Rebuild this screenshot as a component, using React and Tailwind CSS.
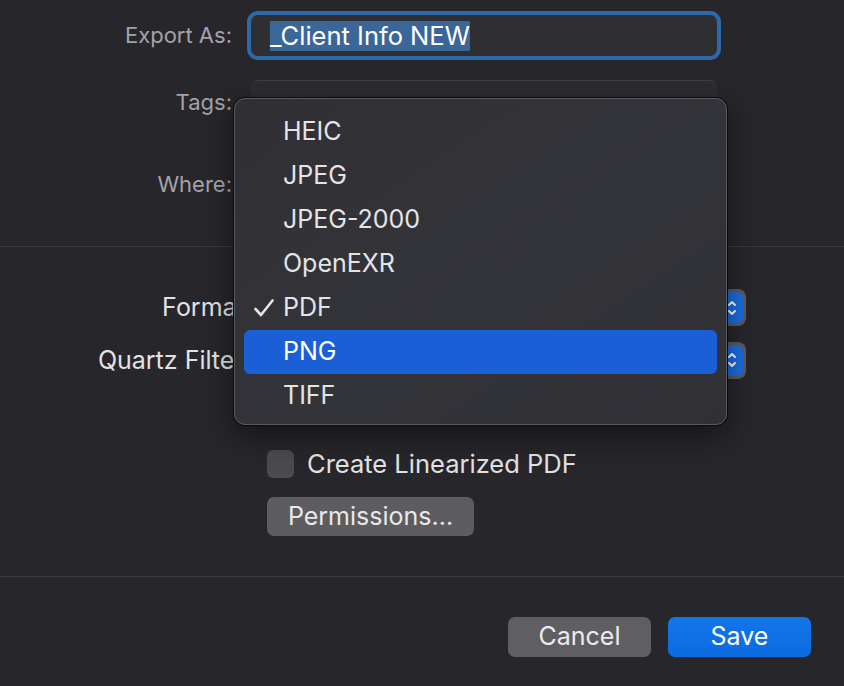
import React from 'react';

const formats = ['HEIC', 'JPEG', 'JPEG-2000', 'OpenEXR', 'PDF', 'PNG', 'TIFF'];

function Stepper() {
  return (
    <div className="w-[22px] h-[31px] rounded-[6px] bg-[#1d6de0] flex items-center justify-center">
      <svg width="12" height="20" viewBox="0 0 12 20" fill="none" stroke="#ffffff" strokeWidth="2" strokeLinecap="round" strokeLinejoin="round">
        <path d="M3 7 L6 4 L9 7" />
        <path d="M3 13 L6 16 L9 13" />
      </svg>
    </div>
  );
}

function PopupButton() {
  return (
    <div className="w-[491px] h-[37px] rounded-[8px] bg-[#5c5b60] p-[3px] flex items-center justify-end">
      <Stepper />
    </div>
  );
}

function Check() {
  return (
    <svg width="22" height="20" viewBox="0 0 22 20" fill="none" stroke="#e4e4e6" strokeWidth="2.6" strokeLinecap="round" strokeLinejoin="round">
      <path d="M2.5 11 L8 17 L19.5 2.5" />
    </svg>
  );
}

function FormatMenu() {
  const selected = 'PDF';
  const highlighted = 'PNG';
  return (
    <div className="absolute left-[234px] top-[98px] w-[493px] h-[327px] rounded-[11px] border border-[#5a595e] bg-gradient-to-br from-[#302f34] via-[#333439] to-[#303035] shadow-[0_0_0_1px_#0b0b0d,0_10px_30px_rgba(0,0,0,0.5)] pt-[11px] px-[9px]">
      {formats.map((f) => (
        <div
          key={f}
          className={
            f === highlighted
              ? 'h-[44px] rounded-[6px] bg-[#1b5fd6] flex items-center text-white'
              : 'h-[44px] flex items-center text-[#e4e4e6]'
          }
        >
          <span className="w-[39px] pl-[9px] flex items-center">{f === selected ? <Check /> : null}</span>
          <span className="text-[25px]">{f}</span>
        </div>
      ))}
    </div>
  );
}

export default function App() {
  return (
    <div className="relative w-[844px] h-[686px] overflow-hidden bg-[#27262b] font-['Inter','Liberation_Sans',sans-serif]">
      {/* name / tags / where */}
      <div className="h-[247px] border-b border-[#3b3a3f] pt-[11px]">
        <div className="flex items-center h-[49px]">
          <div className="w-[232px] text-right text-[22px] text-[#a4a3a8]">Export As:</div>
          <div className="ml-[15px] w-[474px] h-[49px] rounded-[11px] border-[4px] border-[#2b6aa6] bg-[#2f2e33] flex items-center pl-[19px]">
            <span className="bg-[#3b6698] text-white text-[25.5px] leading-[30px]">_Client Info NEW</span>
          </div>
        </div>
        <div className="flex items-center h-[44px] mt-[20px]">
          <div className="w-[232px] text-right text-[22px] text-[#a4a3a8]">Tags:</div>
          <div className="ml-[19px] w-[466px] h-[44px] rounded-[7px] bg-[#2d2c31] border-t border-[#3e3d42]"></div>
        </div>
        <div className="flex items-center h-[40px] mt-[40px]">
          <div className="w-[232px] text-right text-[22px] text-[#a4a3a8]">Where:</div>
          <div className="ml-[19px] w-[466px] h-[40px] rounded-[7px] bg-[#3a393e]"></div>
        </div>
      </div>

      {/* options */}
      <div className="h-[330px] border-b border-[#3b3a3f] pt-[42px]">
        <div className="flex items-center">
          <div className="w-[252px] text-right text-[25px] text-[#e2e2e4]">Format:</div>
          <div className="ml-[3px]"><PopupButton /></div>
        </div>
        <div className="flex items-center mt-[15px]">
          <div className="w-[251px] text-right text-[25px] text-[#e2e2e4]">Quartz Filter:</div>
          <div className="ml-[4px]"><PopupButton /></div>
        </div>
        <div className="flex items-center mt-[70px] ml-[267px] gap-[13px]">
          <div className="w-[27px] h-[28px] rounded-[6px] bg-[#4b4a4f]"></div>
          <span className="text-[25.5px] leading-[30px] text-[#e2e2e4]">Create Linearized PDF</span>
        </div>
        <button className="mt-[18px] ml-[267px] w-[207px] h-[39px] rounded-[7px] bg-[#5d5c61] text-[25px] text-[#e8e8ea]">
          Permissions...
        </button>
      </div>

      {/* actions */}
      <div className="flex justify-end gap-[17px] pr-[33px] pt-[40px]">
        <button className="w-[143px] h-[40px] rounded-[7px] bg-[#5f5e63] text-[25px] text-[#ececee]">Cancel</button>
        <button className="w-[143px] h-[40px] rounded-[7px] bg-gradient-to-b from-[#1276ea] to-[#0d6ae0] text-[25px] text-white">Save</button>
      </div>

      <FormatMenu />
    </div>
  );
}
